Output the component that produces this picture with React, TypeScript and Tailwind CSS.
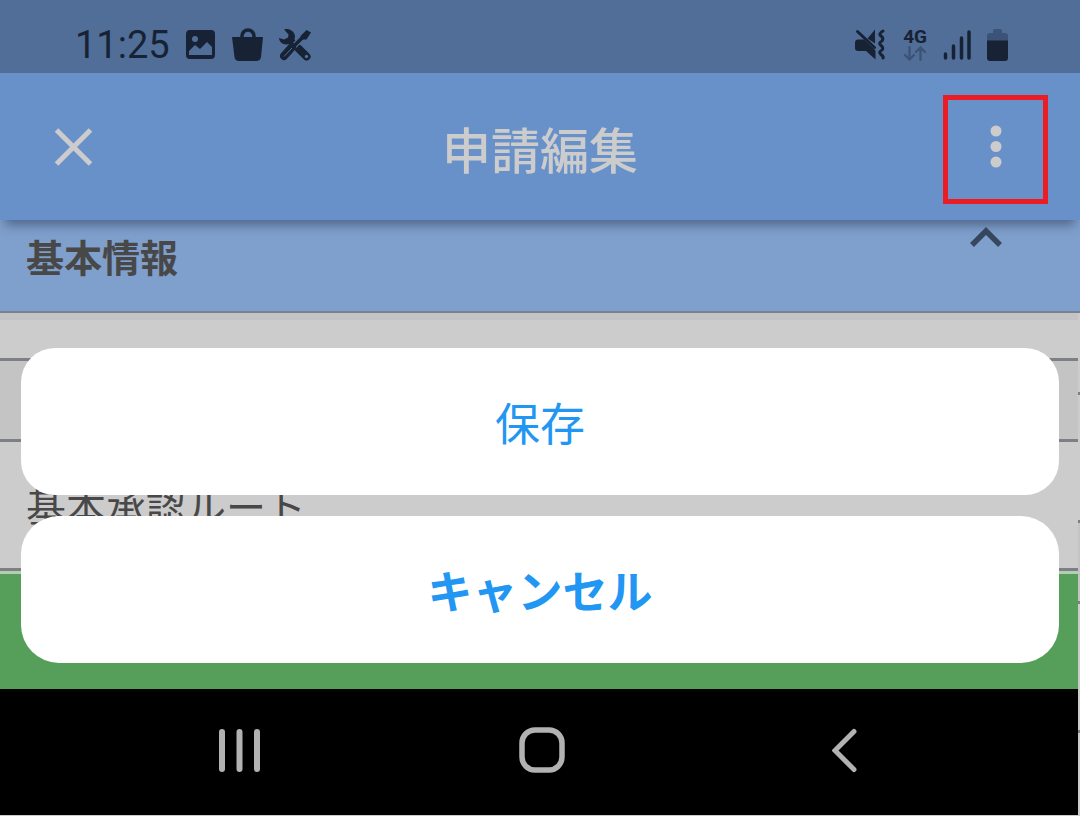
import type { ReactNode } from "react";

const jpFont = "font-['Noto_Sans_CJK_JP',sans-serif]";

export default function App() {
  return (
    <div className={`w-full overflow-hidden bg-[#cccccc] text-[#484848] ${jpFont}`}>
      <StatusBar />
      <AppBar />
      <SectionHeader title="基本情報" />
      <div className="flex">
        <div className="min-w-0 flex-1">
          <main className="relative">
            <div className="h-[7px] bg-[#c4c4c4]" />
            <Row className="h-[41px]" />
            <Row className="h-[81px] bg-[#c4c4c4]" />
            <Row className="h-[129px]">基本承認ルート</Row>
            <div className="h-[118px] border-t-3 border-[#b4cdb5] bg-[#569f5a]" />
            <ActionSheet />
          </main>
          <NavigationBar />
        </div>
        <PageEdge />
      </div>
      <div className="h-px" />
    </div>
  );
}

function StatusBar() {
  return (
    <div className="flex items-center justify-between bg-[#506e97] pt-4 pr-[72px] pl-[75px] text-[#172335]">
      <div className="flex h-[57px] items-center gap-4">
        <time className="font-['Roboto',sans-serif] text-[38px] leading-[40px]">11:25</time>
        <svg width="30" height="32" viewBox="0 0 30 32" aria-hidden="true">
          <rect y="1" width="29" height="29" rx="4" fill="currentColor" />
          <circle cx="9" cy="10" r="3" fill="#506e97" />
          <path d="M3 22L9 16L14 20L21 13L26 18V26H3Z" fill="#506e97" />
        </svg>
        <svg width="31" height="34" viewBox="0 0 31 34" aria-hidden="true">
          <path d="M10 10V8a6 6 0 0 1 12 0v2" fill="none" stroke="currentColor" strokeWidth="3.5" />
          <path d="M0 9H31L29 29Q28.500 33 24 33H7Q3 33 2.500 29Z" fill="currentColor" />
        </svg>
        <svg width="33" height="32" viewBox="0 0 33 32" aria-hidden="true">
          <path
            d="M5 0.500C10-1.500 15.500 2.500 16 7L15.500 10.500L19 14L14 19L10.500 15C5 16.500 0.500 14 0 9L5 10.500L9 8.500L9.500 5.500Z"
            fill="currentColor"
          />
          <path d="M20 20L27.500 27.500" stroke="currentColor" strokeWidth="8" strokeLinecap="round" />
          <circle cx="27.500" cy="27.500" r="1.700" fill="#506e97" />
          <path d="M24 8L12 20" stroke="#506e97" strokeWidth="6" />
          <path d="M26 6L13 19" stroke="currentColor" strokeWidth="3.500" />
          <path d="M21.500 7L27.500 1L32 3.500L27.500 10.500H23Z" fill="currentColor" />
          <path d="M13 18L5 27" stroke="currentColor" strokeWidth="8" strokeLinecap="round" />
          <path d="M13 19L5 27.500" stroke="#506e97" strokeWidth="1" />
        </svg>
      </div>
      <div className="flex h-[57px] items-center gap-4">
        <svg width="30" height="32" viewBox="0 0 30 32" fill="currentColor" aria-hidden="true">
          <path d="M12.500 9.500L20 0.500V14.500Z" />
          <path d="M3 10.500H9L20.500 21.500V30.500L11 22H3Q0 22 0 19V14Q0 10.500 3 10.500Z" />
          <path d="M2.500 2.500L19.500 18.500" stroke="currentColor" strokeWidth="3" strokeLinecap="round" />
          <path
            d="M28 2Q23 5 26 7T27 12Q23 14 26 16.500T27 21Q23 23 26 25.500T28 29"
            fill="none"
            stroke="currentColor"
            strokeWidth="3"
            strokeLinecap="round"
          />
        </svg>
        <div className="flex w-[26px] flex-col items-end">
          <span className="font-['Roboto',sans-serif] text-[19px] leading-[18px] font-bold">4G</span>
          <svg width="24" height="15" viewBox="0 0 24 15" aria-hidden="true">
            <path
              d="M6.500 1V13M2 9L6.500 13.500L11 9M17.500 14V2M13 6L17.500 1.500L22 6"
              fill="none"
              stroke="#3a5376"
              strokeWidth="2.200"
              strokeLinecap="round"
            />
          </svg>
        </div>
        <svg width="28" height="32" viewBox="0 0 28 32" aria-hidden="true">
          <path
            d="M2.500 25V29M10.500 17V29M18.500 9V29M26 3V29"
            stroke="currentColor"
            strokeWidth="3.500"
            strokeLinecap="round"
          />
        </svg>
        <svg width="21" height="34" viewBox="0 0 21 34" aria-hidden="true">
          <path d="M6 5V3Q6 1 8 1H13Q15 1 15 3V5H18Q21 5 21 8V14H0V8Q0 5 3 5Z" fill="#3a5376" />
          <path d="M0 12.500H21V30Q21 33 18 33H3Q0 33 0 30Z" fill="currentColor" />
        </svg>
      </div>
    </div>
  );
}

function AppBar() {
  return (
    <header className="relative z-10 grid grid-cols-[1fr_auto_1fr] items-center bg-[#6891c9] pt-[22px] pr-8 pb-4 pl-8 text-[#cccccc] shadow-[0_10px_10px_-5px_rgba(50,65,95,0.6)]">
      <button type="button" aria-label="閉じる" className="justify-self-start">
        <svg width="105" height="109" viewBox="0 0 105 109" aria-hidden="true">
          <path d="M24.500 35L58.500 69M58.500 35L24.500 69" stroke="currentColor" strokeWidth="5" />
        </svg>
      </button>
      <h1 className="pb-1 text-[49px] leading-[60px] font-medium">申請編集</h1>
      <button
        type="button"
        aria-label="メニュー"
        className="justify-self-end border-5 border-[#ec1c24]"
      >
        <svg width="95" height="99" viewBox="0 0 95 99" fill="currentColor" aria-hidden="true">
          <circle cx="48" cy="31" r="5.500" />
          <circle cx="48" cy="46.500" r="5.500" />
          <circle cx="48" cy="62" r="5.500" />
        </svg>
      </button>
    </header>
  );
}

function SectionHeader({ title }: { title: string }) {
  return (
    <button
      type="button"
      aria-expanded="true"
      className="flex w-full items-start justify-between border-b-2 border-[#7a828f] bg-[#7f9fcc] pt-[7px] pr-[78px] pb-9 pl-[26px]"
    >
      <span className="mt-[10px] text-[38px] leading-[38px] font-bold">{title}</span>
      <svg width="32" height="21" viewBox="0 0 32 21" aria-hidden="true">
        <path d="M2 18L16 4L30 18" fill="none" stroke="#36475e" strokeWidth="5.500" />
      </svg>
    </button>
  );
}

function Row({ className, children }: { className: string; children?: ReactNode }) {
  return (
    <div
      className={`flex items-center border-b-3 border-[#7c7f83] pl-[26px] text-[40px] leading-[40px] ${className}`}
    >
      {children}
    </div>
  );
}

function ActionSheet() {
  return (
    <div
      role="dialog"
      aria-label="操作"
      className="absolute right-[19px] bottom-[26px] left-[21px] flex flex-col gap-[21px] text-[45px] leading-[67px] text-[#2196f3]"
    >
      <button type="button" className="rounded-[34px] bg-white py-10">
        保存
      </button>
      <button type="button" className="rounded-[38px] bg-white py-10 font-bold">
        キャンセル
      </button>
    </div>
  );
}

function NavigationBar() {
  return (
    <nav className="grid grid-cols-3 items-center justify-items-center bg-black pt-[38px] pr-[82px] pb-10 pl-[88px] text-[#b2b2b2]">
      <button type="button" aria-label="履歴">
        <svg width="42" height="48" viewBox="0 0 42 48" aria-hidden="true">
          <path
            d="M4 5V42M21.500 5V42M39 5V42"
            stroke="currentColor"
            strokeWidth="6"
            strokeLinecap="round"
          />
        </svg>
      </button>
      <button type="button" aria-label="ホーム">
        <svg width="48" height="48" viewBox="0 0 48 48" aria-hidden="true">
          <rect
            x="4"
            y="3"
            width="40"
            height="40"
            rx="13"
            fill="none"
            stroke="currentColor"
            strokeWidth="5.500"
          />
        </svg>
      </button>
      <button type="button" aria-label="戻る">
        <svg width="26" height="48" viewBox="0 0 26 48" aria-hidden="true">
          <path
            d="M22 4.500L3 23.500L22 42.500"
            fill="none"
            stroke="currentColor"
            strokeWidth="5"
            strokeLinecap="round"
          />
        </svg>
      </button>
    </nav>
  );
}

// sliver of the page behind, visible along the right side
function PageEdge() {
  return (
    <div className="flex w-[2px] flex-col *:border-b-3 *:border-[#7c7f83]">
      <div className="h-[82px]" />
      <div className="h-[128px]" />
      <div className="h-[81px] bg-[#c4c4c4]" />
      <div className="h-[129px]" />
    </div>
  );
}
